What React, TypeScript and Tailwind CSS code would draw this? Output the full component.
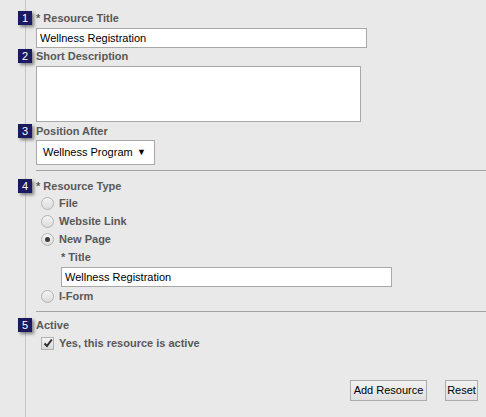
import React from "react";

function Badge({ n }: { n: number }) {
  return (
    <span className="absolute left-[-18px] top-0 flex h-[14px] w-[14px] items-center justify-center bg-[#1c1a5e] text-[11px] font-normal leading-none text-white shadow-[2px_2px_3px_rgba(0,0,0,0.45)]">
      {n}
    </span>
  );
}

function Label({ n, children }: { n?: number; children: React.ReactNode }) {
  return (
    <div className="relative h-[14px] text-[11px] font-bold leading-[14px] text-[#585858]">
      {n !== undefined && <Badge n={n} />}
      {children}
    </div>
  );
}

function Radio({ label, checked }: { label: string; checked?: boolean }) {
  return (
    <div className="flex h-[18px] items-center pl-[5px]">
      <span className="flex h-[13px] w-[13px] items-center justify-center rounded-full border border-[#b4b4b4] bg-gradient-to-b from-[#f4f4f4] to-[#dcdcdc]">
        {checked && <span className="h-[5px] w-[5px] rounded-full bg-[#3a3a3a]" />}
      </span>
      <span className="ml-[5px] text-[11px] font-bold text-[#585858]">{label}</span>
    </div>
  );
}

export default function App() {
  return (
    <div className="min-h-screen bg-[#e9e9e9] font-['Liberation_Sans',Arial,sans-serif] text-[11px]">
      <div className="ml-[25px] min-h-[417px] border-l border-[#c6c6c6] pl-[10px] pt-[11px]">
        {/* 1 */}
        <Label n={1}>* Resource Title</Label>
        <input
          readOnly
          value="Wellness Registration"
          className="mt-[3px] block h-[20px] w-[331px] border border-[#a8a8a8] bg-white px-[3px] text-[11px] text-black outline-none"
        />

        {/* 2 */}
        <div className="mt-[1px]">
          <Label n={2}>Short Description</Label>
        </div>
        <textarea
          readOnly
          className="mt-[3px] block h-[56px] w-[325px] resize-none border border-[#a8a8a8] bg-white outline-none"
        />

        {/* 3 */}
        <div className="mt-[2px]">
          <Label n={3}>Position After</Label>
        </div>
        <div className="mt-[2px] flex h-[25px] w-[119px] items-center justify-between border border-[#a8a8a8] bg-white pl-[6px] pr-[8px] text-[11px] text-black">
          <span>Wellness Program</span>
          <span className="text-[9px] leading-none">▼</span>
        </div>

        <div className="mt-[5px] border-t border-[#a3a3a3]" />

        {/* 4 */}
        <div className="mt-[8px]">
          <Label n={4}>* Resource Type</Label>
        </div>
        <div className="mt-[1px]">
          <Radio label="File" />
          <Radio label="Website Link" />
          <Radio label="New Page" checked />
          <div className="ml-[25px] mt-[2px]">
            <Label>* Title</Label>
            <input
              readOnly
              value="Wellness Registration"
              className="mt-[3px] block h-[20px] w-[331px] border border-[#a8a8a8] bg-white px-[3px] text-[11px] text-black outline-none"
            />
          </div>
          <Radio label="I-Form" />
        </div>

        <div className="mt-[6px] border-t border-[#a3a3a3]" />

        {/* 5 */}
        <div className="mt-[6px]">
          <Label n={5}>Active</Label>
        </div>
        <div className="mt-[2px] flex h-[18px] items-center pl-[5px]">
          <span className="flex h-[13px] w-[13px] items-center justify-center border border-[#b0b0b0] bg-gradient-to-b from-[#f4f4f4] to-[#d8d8d8]">
            <svg width="10" height="10" viewBox="0 0 10 10">
              <path d="M1.5 5.5 L4 8 L8.8 1.5" fill="none" stroke="#2e2e2e" strokeWidth="2" />
            </svg>
          </span>
          <span className="ml-[5px] text-[11px] font-bold text-[#585858]">Yes, this resource is active</span>
        </div>

        <div className="mt-[28px] flex justify-end gap-[18px] pr-[8px]">
          <button className="h-[21px] w-[77px] border border-[#acacac] bg-gradient-to-b from-[#f2f2f2] to-[#e0e0e0] text-[11px] text-black">
            Add Resource
          </button>
          <button className="h-[21px] w-[33px] border border-[#acacac] bg-gradient-to-b from-[#f2f2f2] to-[#e0e0e0] text-[11px] text-black">
            Reset
          </button>
        </div>
      </div>
    </div>
  );
}
